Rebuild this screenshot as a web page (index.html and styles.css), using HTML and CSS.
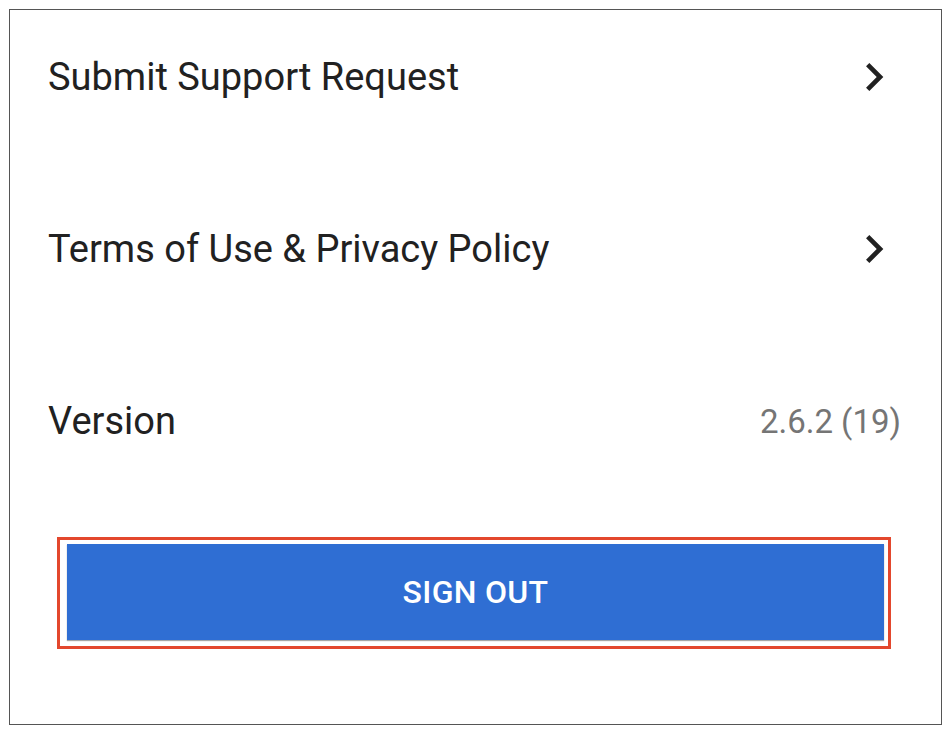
FILE: index.html
```html
<!DOCTYPE html>
<html>
<head>
<meta charset="utf-8">
<link rel="stylesheet" href="styles.css">
</head>
<body>
<div class="panel">
  <div class="row">
    <span class="label">Submit Support Request</span>
    <svg class="chev" viewBox="0 0 24 24"><path d="M10 6L8.59 7.41 13.17 12l-4.58 4.59L10 18l6-6z"/></svg>
  </div>
  <div class="row">
    <span class="label">Terms of Use &amp; Privacy Policy</span>
    <svg class="chev" viewBox="0 0 24 24"><path d="M10 6L8.59 7.41 13.17 12l-4.58 4.59L10 18l6-6z"/></svg>
  </div>
  <div class="row">
    <span class="label">Version</span>
    <span class="value">2.6.2 (19)</span>
  </div>
  <div class="highlight">
    <button class="signout">SIGN OUT</button>
  </div>
</div>
</body>
</html>
```
FILE: styles.css
```css
html, body {
  margin: 0;
  padding: 0;
  background: #ffffff;
}
body {
  font-family: Roboto, "Noto Sans", sans-serif;
}
.panel {
  box-sizing: border-box;
  margin: 9px 0 0 9px;
  width: 933px;
  height: 716px;
  border: 1px solid #555555;
  padding: 7px 40px 0 38px;
  display: flex;
  flex-direction: column;
  gap: 52px;
}
.row {
  height: 120px;
  display: flex;
  align-items: center;
  justify-content: space-between;
}
.label {
  font-size: 38px;
  color: #212121;
}
.value {
  font-size: 33px;
  color: #757575;
}
.chev {
  width: 56px;
  height: 56px;
  margin-right: -1px;
  fill: #212121;
}
.highlight {
  margin: 4px 0 0 9px;
  width: 834px;
  height: 112px;
  box-sizing: border-box;
  border: 3px solid #e3472d;
  padding: 4px 4px 6px 7px;
}
.signout {
  display: block;
  width: 100%;
  height: 96px;
  border: none;
  background: #2f6ed3;
  box-shadow: 0 1px 1px rgba(0,0,0,0.35);
  color: #ffffff;
  font-family: Roboto, "Noto Sans", sans-serif;
  font-weight: 500;
  font-size: 32px;
  letter-spacing: 0.3px;
  padding: 0;
}
```
